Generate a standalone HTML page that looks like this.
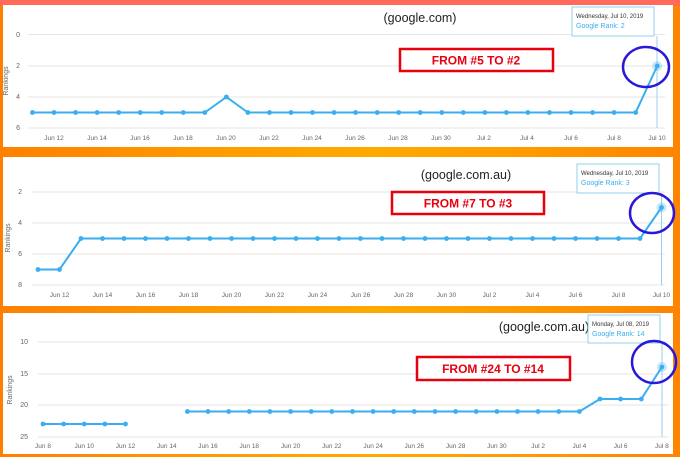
<!DOCTYPE html>
<html><head><meta charset="utf-8"><style>
html,body{margin:0;padding:0;width:680px;height:457px;overflow:hidden;}
body{background:linear-gradient(90deg,#ff8000 0%,#ff9a00 30%,#ffaa00 55%,#ff9800 80%,#ff8400 100%);}
svg{display:block;font-family:"Liberation Sans",sans-serif;}
.ax{font-size:6.5px;fill:#666;text-anchor:middle;}
.yl{font-size:7px;fill:#666;text-anchor:end;}
.g{stroke:#e6e6e6;stroke-width:1;}
.ln{fill:none;stroke:#3aaeef;stroke-width:2;marker-start:url(#d);marker-mid:url(#d);marker-end:url(#d);}
.t{font-size:12.5px;fill:#222;text-anchor:middle;}
.rb{fill:#fff;stroke:#e8000f;stroke-width:2.5;}
.rt{font-family:"Liberation Sans Narrow","Liberation Sans",sans-serif;font-size:12px;font-weight:bold;fill:#e8000f;text-anchor:middle;}
.tt{fill:#fff;stroke:#7cc4ef;stroke-width:0.8;}
.t1{font-size:6px;fill:#333;}
.t2{font-size:7px;fill:#3aaeef;}
.ci{fill:none;stroke:#2a18d8;stroke-width:2.5;}
.rk{font-size:7px;fill:#666;text-anchor:middle;}
</style></head><body>
<svg width="680" height="457" viewBox="0 0 680 457">
<defs><marker id="d" markerUnits="userSpaceOnUse" markerWidth="6" markerHeight="6" refX="3" refY="3"><circle cx="3" cy="3" r="2.4" fill="#3aaeef"/></marker></defs>
<rect x="0" y="0" width="680" height="6" fill="#ff6a5a"/>
<!-- Panel 1 -->
<rect x="3" y="5" width="670" height="142" fill="#fff"/>
<text class="t" x="420" y="22">(google.com)</text>
<line class="g" x1="28" y1="34.5" x2="665" y2="34.5"/><line class="g" x1="28" y1="66" x2="665" y2="66"/><line class="g" x1="28" y1="97" x2="665" y2="97"/><line class="g" x1="28" y1="128" x2="665" y2="128" stroke="#cfd8e6"/>
<text class="yl" x="20" y="37">0</text><text class="yl" x="20" y="68">2</text><text class="yl" x="20" y="99">4</text><text class="yl" x="20" y="130">6</text>
<text class="rk" transform="translate(8,81) rotate(-90)">Rankings</text>
<line x1="657" y1="36" x2="657" y2="128" stroke="#9ccfee" stroke-width="1"/>
<polyline class="ln" points="32.5,112.5 54,112.5 75.6,112.5 97.1,112.5 118.7,112.5 140.2,112.5 161.7,112.5 183.3,112.5 204.8,112.5 226.4,97 247.9,112.5 269.5,112.5 291,112.5 312.5,112.5 334.1,112.5 355.6,112.5 377.2,112.5 398.7,112.5 420.2,112.5 441.8,112.5 463.3,112.5 484.9,112.5 506.4,112.5 527.9,112.5 549.5,112.5 571,112.5 592.6,112.5 614.1,112.5 635.7,112.5 657.2,66"/>
<circle cx="657" cy="66" r="5" fill="#3aaeef" opacity="0.3"/>
<g class="ax"><text x="54" y="140">Jun 12</text><text x="97" y="140">Jun 14</text><text x="140" y="140">Jun 16</text><text x="183" y="140">Jun 18</text><text x="226" y="140">Jun 20</text><text x="269" y="140">Jun 22</text><text x="312" y="140">Jun 24</text><text x="355" y="140">Jun 26</text><text x="398" y="140">Jun 28</text><text x="441" y="140">Jun 30</text><text x="484" y="140">Jul 2</text><text x="527" y="140">Jul 4</text><text x="571" y="140">Jul 6</text><text x="614" y="140">Jul 8</text><text x="657" y="140">Jul 10</text></g>
<rect class="rb" x="400" y="49" width="153" height="22"/><text class="rt" x="476" y="64.5">FROM #5 TO #2</text>
<rect class="tt" x="572" y="7" width="82" height="29"/><text class="t1" x="576" y="18">Wednesday, Jul 10, 2019</text><text class="t2" x="576" y="28">Google Rank: 2</text>
<ellipse class="ci" cx="646" cy="67" rx="23" ry="20"/>
<!-- Panel 2 -->
<rect x="3" y="157" width="670" height="149" fill="#fff"/>
<text class="t" x="466" y="179">(google.com.au)</text>
<line class="g" x1="32" y1="192" x2="665" y2="192"/><line class="g" x1="32" y1="223" x2="665" y2="223"/><line class="g" x1="32" y1="254" x2="665" y2="254"/><line class="g" x1="32" y1="285" x2="665" y2="285" stroke="#cfd8e6"/>
<text class="yl" x="22" y="194">2</text><text class="yl" x="22" y="225">4</text><text class="yl" x="22" y="256">6</text><text class="yl" x="22" y="287">8</text>
<text class="rk" transform="translate(10,238) rotate(-90)">Rankings</text>
<line x1="661.5" y1="193" x2="661.5" y2="285" stroke="#9ccfee" stroke-width="1"/>
<polyline class="ln" points="38,269.5 59.5,269.5 81,238.5 102.5,238.5 124,238.5 145.5,238.5 167,238.5 188.5,238.5 210,238.5 231.5,238.5 253,238.5 274.5,238.5 296,238.5 317.5,238.5 339,238.5 360.5,238.5 382,238.5 403.5,238.5 425,238.5 446.5,238.5 468,238.5 489.5,238.5 511,238.5 532.5,238.5 554,238.5 575.5,238.5 597,238.5 618.5,238.5 640,238.5 661.5,207.5"/>
<circle cx="661.5" cy="207.5" r="5" fill="#3aaeef" opacity="0.3"/>
<g class="ax"><text x="59.5" y="297">Jun 12</text><text x="102.5" y="297">Jun 14</text><text x="145.5" y="297">Jun 16</text><text x="188.5" y="297">Jun 18</text><text x="231.5" y="297">Jun 20</text><text x="274.5" y="297">Jun 22</text><text x="317.5" y="297">Jun 24</text><text x="360.5" y="297">Jun 26</text><text x="403.5" y="297">Jun 28</text><text x="446.5" y="297">Jun 30</text><text x="489.5" y="297">Jul 2</text><text x="532.5" y="297">Jul 4</text><text x="575.5" y="297">Jul 6</text><text x="618.5" y="297">Jul 8</text><text x="661.5" y="297">Jul 10</text></g>
<rect class="rb" x="392" y="192" width="152" height="22"/><text class="rt" x="468" y="207.5">FROM #7 TO #3</text>
<rect class="tt" x="577" y="164" width="82" height="29"/><text class="t1" x="581" y="175">Wednesday, Jul 10, 2019</text><text class="t2" x="581" y="185">Google Rank: 3</text>
<ellipse class="ci" cx="652" cy="213" rx="22" ry="20"/>
<!-- Panel 3 -->
<rect x="3" y="313" width="670" height="141" fill="#fff"/>
<text class="t" x="544" y="331">(google.com.au)</text>
<line class="g" x1="38" y1="342" x2="668" y2="342"/><line class="g" x1="38" y1="374" x2="668" y2="374"/><line class="g" x1="38" y1="405" x2="668" y2="405"/><line class="g" x1="38" y1="437" x2="668" y2="437" stroke="#cfd8e6"/>
<text class="yl" x="28" y="344">10</text><text class="yl" x="28" y="376">15</text><text class="yl" x="28" y="407">20</text><text class="yl" x="28" y="439">25</text>
<text class="rk" transform="translate(12,390) rotate(-90)">Rankings</text>
<line x1="662" y1="343" x2="662" y2="437" stroke="#9ccfee" stroke-width="1"/>
<polyline class="ln" points="43,424 63.6,424 84.3,424 104.9,424 125.5,424"/>
<polyline class="ln" points="187.4,411.5 208,411.5 228.7,411.5 249.3,411.5 269.9,411.5 290.6,411.5 311.2,411.5 331.8,411.5 352.5,411.5 373.1,411.5 393.7,411.5 414.3,411.5 435,411.5 455.6,411.5 476.2,411.5 496.9,411.5 517.5,411.5 538.1,411.5 558.8,411.5 579.4,411.5 600,399 620.6,399 641.3,399 661.9,367"/>
<circle cx="661.9" cy="367" r="5" fill="#3aaeef" opacity="0.3"/>
<g class="ax"><text x="43" y="448">Jun 8</text><text x="84.3" y="448">Jun 10</text><text x="125.5" y="448">Jun 12</text><text x="166.8" y="448">Jun 14</text><text x="208" y="448">Jun 16</text><text x="249.3" y="448">Jun 18</text><text x="290.6" y="448">Jun 20</text><text x="331.8" y="448">Jun 22</text><text x="373.1" y="448">Jun 24</text><text x="414.3" y="448">Jun 26</text><text x="455.6" y="448">Jun 28</text><text x="496.9" y="448">Jun 30</text><text x="538.1" y="448">Jul 2</text><text x="579.4" y="448">Jul 4</text><text x="620.6" y="448">Jul 6</text><text x="661.9" y="448">Jul 8</text></g>
<rect class="rb" x="417" y="357" width="153" height="23"/><text class="rt" x="493" y="373">FROM #24 TO #14</text>
<rect class="tt" x="588" y="315" width="72" height="28"/><text class="t1" x="592" y="326">Monday, Jul 08, 2019</text><text class="t2" x="592" y="336">Google Rank: 14</text>
<ellipse class="ci" cx="654" cy="362" rx="22" ry="21"/>
</svg>
</body></html>
